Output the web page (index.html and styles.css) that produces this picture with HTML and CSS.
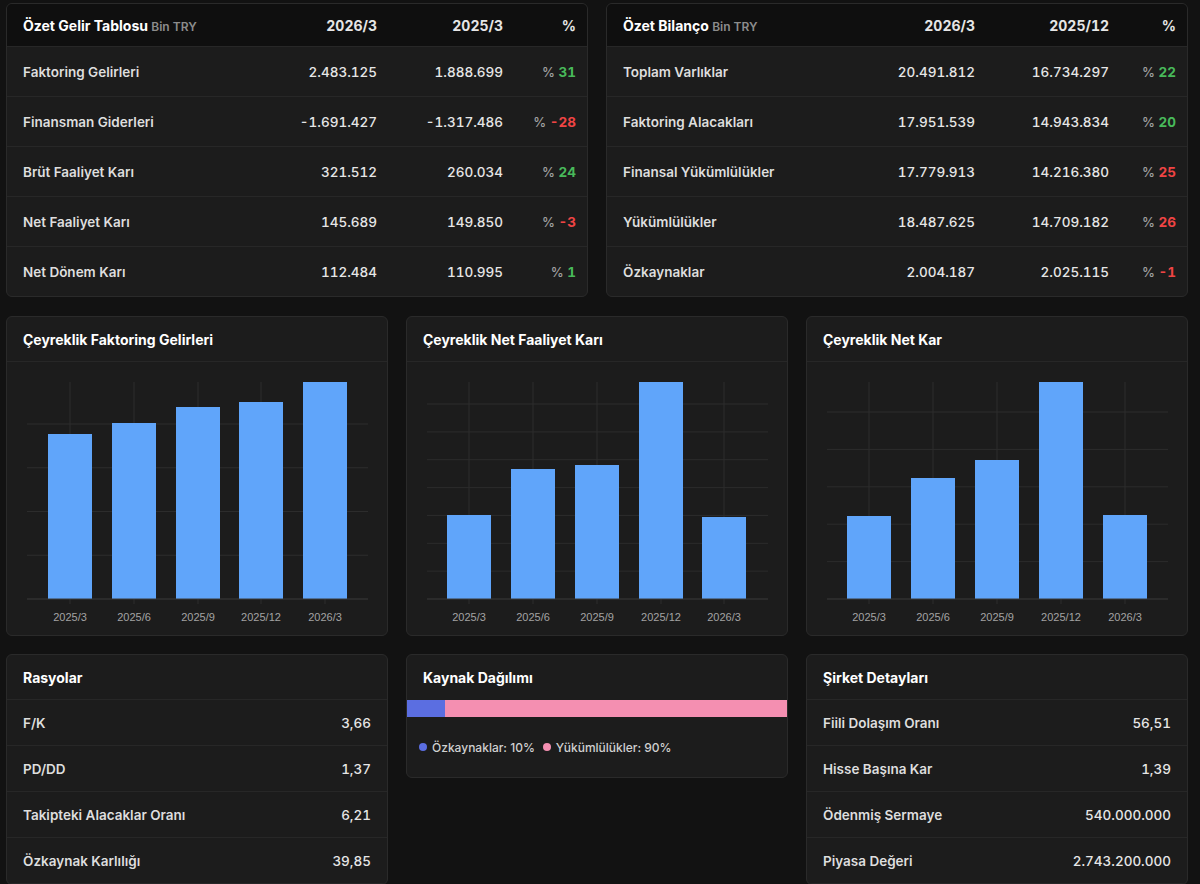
FILE: index.html
```html
<!DOCTYPE html>
<html lang="tr">
<head>
<meta charset="utf-8">
<title>Özet</title>
<link rel="stylesheet" href="styles.css">
</head>
<body>
<div class="page">
  <div class="row row-2">
    <section class="card">
      <div class="tbl tbl-income">
        <div class="thead">
          <div class="tcell title">Özet Gelir Tablosu <span class="unit">Bin TRY</span></div>
          <div class="tcell num head">2026/3</div>
          <div class="tcell num head">2025/3</div>
          <div class="tcell num head">%</div>
        </div>
        <div class="trow"><div class="tcell label">Faktoring Gelirleri</div><div class="tcell num">2.483.125</div><div class="tcell num">1.888.699</div><div class="tcell num pct"><span class="pc">%</span> <b class="up">31</b></div></div>
        <div class="trow"><div class="tcell label">Finansman Giderleri</div><div class="tcell num">-1.691.427</div><div class="tcell num">-1.317.486</div><div class="tcell num pct"><span class="pc">%</span> <b class="down">-28</b></div></div>
        <div class="trow"><div class="tcell label">Brüt Faaliyet Karı</div><div class="tcell num">321.512</div><div class="tcell num">260.034</div><div class="tcell num pct"><span class="pc">%</span> <b class="up">24</b></div></div>
        <div class="trow"><div class="tcell label">Net Faaliyet Karı</div><div class="tcell num">145.689</div><div class="tcell num">149.850</div><div class="tcell num pct"><span class="pc">%</span> <b class="down">-3</b></div></div>
        <div class="trow"><div class="tcell label">Net Dönem Karı</div><div class="tcell num">112.484</div><div class="tcell num">110.995</div><div class="tcell num pct"><span class="pc">%</span> <b class="up">1</b></div></div>
      </div>
    </section>
    <section class="card">
      <div class="tbl tbl-balance">
        <div class="thead">
          <div class="tcell title">Özet Bilanço <span class="unit">Bin TRY</span></div>
          <div class="tcell num head">2026/3</div>
          <div class="tcell num head">2025/12</div>
          <div class="tcell num head">%</div>
        </div>
        <div class="trow"><div class="tcell label">Toplam Varlıklar</div><div class="tcell num">20.491.812</div><div class="tcell num">16.734.297</div><div class="tcell num pct"><span class="pc">%</span> <b class="up">22</b></div></div>
        <div class="trow"><div class="tcell label">Faktoring Alacakları</div><div class="tcell num">17.951.539</div><div class="tcell num">14.943.834</div><div class="tcell num pct"><span class="pc">%</span> <b class="up">20</b></div></div>
        <div class="trow"><div class="tcell label">Finansal Yükümlülükler</div><div class="tcell num">17.779.913</div><div class="tcell num">14.216.380</div><div class="tcell num pct"><span class="pc">%</span> <b class="down">25</b></div></div>
        <div class="trow"><div class="tcell label">Yükümlülükler</div><div class="tcell num">18.487.625</div><div class="tcell num">14.709.182</div><div class="tcell num pct"><span class="pc">%</span> <b class="down">26</b></div></div>
        <div class="trow"><div class="tcell label">Özkaynaklar</div><div class="tcell num">2.004.187</div><div class="tcell num">2.025.115</div><div class="tcell num pct"><span class="pc">%</span> <b class="down">-1</b></div></div>
      </div>
    </section>
  </div>

  <div class="row row-3 charts">
    <section class="card">
      <h3 class="card-title">Çeyreklik Faktoring Gelirleri</h3>
      <svg class="chart" viewBox="0 0 380 273" width="380" height="273">
        <g class="grid">
          <line x1="20" x2="361" y1="62" y2="62"/><line x1="20" x2="361" y1="105.75" y2="105.75"/><line x1="20" x2="361" y1="149.5" y2="149.5"/><line x1="20" x2="361" y1="193.25" y2="193.25"/>
          <line x1="63" x2="63" y1="20" y2="242"/><line x1="127" x2="127" y1="20" y2="242"/><line x1="191" x2="191" y1="20" y2="242"/><line x1="254" x2="254" y1="20" y2="242"/><line x1="318" x2="318" y1="20" y2="242"/>
        </g>
        <g class="bars">
          <rect x="41" y="72" width="44" height="165"/><rect x="105" y="61" width="44" height="176"/><rect x="169" y="45" width="44" height="192"/><rect x="232" y="40" width="44" height="197"/><rect x="296" y="20" width="44" height="217"/>
        </g>
        <line class="axis" x1="20" x2="361" y1="237" y2="237"/>
        <g class="xlab"><text x="63" y="259">2025/3</text><text x="127" y="259">2025/6</text><text x="191" y="259">2025/9</text><text x="254" y="259">2025/12</text><text x="318" y="259">2026/3</text></g>
      </svg>
    </section>
    <section class="card">
      <h3 class="card-title">Çeyreklik Net Faaliyet Karı</h3>
      <svg class="chart" viewBox="0 0 380 273" width="380" height="273">
        <g class="grid">
          <line x1="20" x2="361" y1="42" y2="42"/><line x1="20" x2="361" y1="69.9" y2="69.9"/><line x1="20" x2="361" y1="97.7" y2="97.7"/><line x1="20" x2="361" y1="125.6" y2="125.6"/><line x1="20" x2="361" y1="153.4" y2="153.4"/><line x1="20" x2="361" y1="181.3" y2="181.3"/><line x1="20" x2="361" y1="209.1" y2="209.1"/>
          <line x1="62" x2="62" y1="20" y2="242"/><line x1="126" x2="126" y1="20" y2="242"/><line x1="190" x2="190" y1="20" y2="242"/><line x1="254" x2="254" y1="20" y2="242"/><line x1="317" x2="317" y1="20" y2="242"/>
        </g>
        <g class="bars">
          <rect x="40" y="153" width="44" height="84"/><rect x="104" y="107" width="44" height="130"/><rect x="168" y="103" width="44" height="134"/><rect x="232" y="20" width="44" height="217"/><rect x="295" y="155" width="44" height="82"/>
        </g>
        <line class="axis" x1="20" x2="361" y1="237" y2="237"/>
        <g class="xlab"><text x="62" y="259">2025/3</text><text x="126" y="259">2025/6</text><text x="190" y="259">2025/9</text><text x="254" y="259">2025/12</text><text x="317" y="259">2026/3</text></g>
      </svg>
    </section>
    <section class="card">
      <h3 class="card-title">Çeyreklik Net Kar</h3>
      <svg class="chart" viewBox="0 0 380 273" width="380" height="273">
        <g class="grid">
          <line x1="20" x2="361" y1="50" y2="50"/><line x1="20" x2="361" y1="87.4" y2="87.4"/><line x1="20" x2="361" y1="124.8" y2="124.8"/><line x1="20" x2="361" y1="162.2" y2="162.2"/><line x1="20" x2="361" y1="199.6" y2="199.6"/>
          <line x1="62" x2="62" y1="20" y2="242"/><line x1="126" x2="126" y1="20" y2="242"/><line x1="190" x2="190" y1="20" y2="242"/><line x1="254" x2="254" y1="20" y2="242"/><line x1="318" x2="318" y1="20" y2="242"/>
        </g>
        <g class="bars">
          <rect x="40" y="154" width="44" height="83"/><rect x="104" y="116" width="44" height="121"/><rect x="168" y="98" width="44" height="139"/><rect x="232" y="20" width="44" height="217"/><rect x="296" y="153" width="44" height="84"/>
        </g>
        <line class="axis" x1="20" x2="361" y1="237" y2="237"/>
        <g class="xlab"><text x="62" y="259">2025/3</text><text x="126" y="259">2025/6</text><text x="190" y="259">2025/9</text><text x="254" y="259">2025/12</text><text x="318" y="259">2026/3</text></g>
      </svg>
    </section>
  </div>

  <div class="row row-3 bottom">
    <section class="card">
      <h3 class="card-title">Rasyolar</h3>
      <div class="kv"><span class="label">F/K</span><span class="val">3,66</span></div>
      <div class="kv"><span class="label">PD/DD</span><span class="val">1,37</span></div>
      <div class="kv"><span class="label">Takipteki Alacaklar Oranı</span><span class="val">6,21</span></div>
      <div class="kv"><span class="label">Özkaynak Karlılığı</span><span class="val">39,85</span></div>
    </section>
    <section class="card card-short">
      <h3 class="card-title flat">Kaynak Dağılımı</h3>
      <div class="stack">
        <div class="seg seg-eq" style="width:10%"></div>
        <div class="seg seg-li" style="width:90%"></div>
      </div>
      <div class="legend">
        <span class="dot dot-eq"></span><span class="ltext">Özkaynaklar: 10%</span>
        <span class="dot dot-li"></span><span class="ltext">Yükümlülükler: 90%</span>
      </div>
    </section>
    <section class="card">
      <h3 class="card-title">Şirket Detayları</h3>
      <div class="kv"><span class="label">Fiili Dolaşım Oranı</span><span class="val">56,51</span></div>
      <div class="kv"><span class="label">Hisse Başına Kar</span><span class="val">1,39</span></div>
      <div class="kv"><span class="label">Ödenmiş Sermaye</span><span class="val">540.000.000</span></div>
      <div class="kv"><span class="label">Piyasa Değeri</span><span class="val">2.743.200.000</span></div>
    </section>
  </div>
</div>
</body>
</html>
```

FILE: styles.css
```css
* { box-sizing: border-box; }
html, body { margin: 0; padding: 0; }
body {
  background: #121212;
  color: #e2e2e2;
  font-family: Inter, "Noto Sans", "Liberation Sans", sans-serif;
  font-size: 14px;
}
.page {
  padding: 3px 12px 0 6px;
  display: flex;
  flex-direction: column;
}
.row { display: grid; gap: 18px; }
.row-2 { grid-template-columns: 1fr 1fr; }
.row-3 { grid-template-columns: 1fr 1fr 1fr; align-items: start; }
.charts { margin-top: 19px; }
.bottom { margin-top: 18px; }

.card {
  background: #1c1c1c;
  border: 1px solid #2a2a2a;
  border-radius: 6px;
  overflow: hidden;
}

/* tables */
.tbl .thead, .tbl .trow {
  display: grid;
  align-items: center;
  padding: 0 11px 0 16px;
}
.tbl-income .thead, .tbl-income .trow { grid-template-columns: 1fr 120px 126px 73px; }
.tbl-balance .thead, .tbl-balance .trow { grid-template-columns: 1fr 120px 134px 67px; }
.tbl .thead {
  height: 42px;
  background: #0f0f0f;
}
.tbl .trow {
  height: 50px;
  border-top: 1px solid #272727;
}
.title {
  font-weight: 700;
  font-size: 14px;
  color: #ffffff;
}
.unit {
  font-size: 12px;
  font-weight: 600;
  color: #8c8c8c;
}
.head {
  font-weight: 700;
  color: #ffffff;
}
.num {
  text-align: right;
  font-variant-numeric: tabular-nums;
  font-weight: 500;
  font-size: 13.5px;
  color: #e6e6e6;
}
.head.num { font-weight: 700; font-size: 14px; }
.label {
  font-weight: 600;
  font-size: 13.5px;
  color: #dedede;
}
.pct .pc { color: #a0a0a0; font-weight: 500; font-size: 13px; }
.pct b { font-weight: 700; }
.up { color: #48b95a; }
.down { color: #ef4444; }

/* card titles */
.card-title {
  margin: 0;
  height: 45px;
  padding: 0 16px;
  display: flex;
  align-items: center;
  font-size: 14px;
  font-weight: 700;
  color: #ffffff;
  border-bottom: 1px solid #272727;
}
.card-title.flat { border-bottom: 0; height: 45px; }

/* charts */
.chart { display: block; width: 380px; height: 273px; }
.grid line { stroke: #2c2c2c; stroke-width: 1; }
.axis { stroke: #3a3a3a; stroke-width: 1; }
.bars rect { fill: #60a5fa; }
.xlab text {
  font-family: "Liberation Sans", Arial, sans-serif;
  font-size: 11px;
  fill: #a3a3a3;
  text-anchor: middle;
}

/* key/value lists */
.kv {
  height: 46px;
  padding: 0 16px;
  display: flex;
  align-items: center;
  justify-content: space-between;
  border-bottom: 1px solid #272727;
}
.kv .val {
  font-variant-numeric: tabular-nums;
  font-weight: 500;
  font-size: 13.5px;
  color: #e6e6e6;
}

/* stacked bar */
.stack { display: flex; height: 17px; }
.seg-eq { background: #5b6ee1; }
.seg-li { background: #f48fb1; }
.legend {
  display: flex;
  align-items: center;
  padding: 0 12px;
  height: 60px;
  font-size: 12px;
  font-weight: 500;
  color: #d0d0d0;
}
.dot {
  width: 8px; height: 8px; border-radius: 50%;
  margin-right: 5px;
}
.dot-eq { background: #5b6ee1; }
.dot-li { background: #f48fb1; margin-left: 8px; }
.ltext { white-space: nowrap; }
```
